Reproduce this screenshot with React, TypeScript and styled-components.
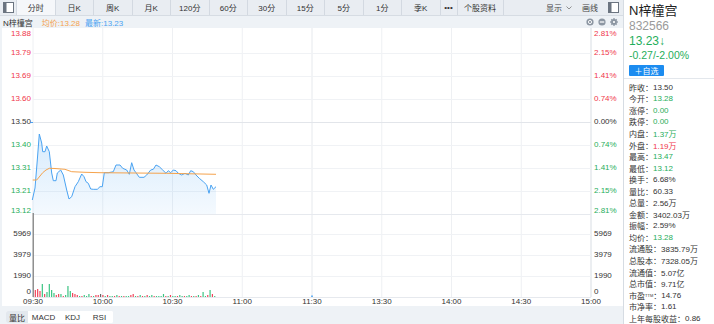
import React from 'react';
import styled, { createGlobalStyle } from 'styled-components';

const GlobalStyle = createGlobalStyle`
  body {
    margin: 0;
    background: #fff;
    font-family: "Liberation Sans", "Noto Sans CJK SC", sans-serif;
    color: #333;
  }
  * { box-sizing: border-box; }
`;

const RED = '#f0364a';
const GREEN = '#1fae5b';
const BLUE = '#4aa3f2';
const ORANGE = '#f5a34d';

const Page = styled.div`
  display: flex;
  width: 714px;
  height: 324px;
  overflow: hidden;
`;

const Main = styled.div`
  width: 623px;
  display: flex;
  flex-direction: column;
`;

const Toolbar = styled.div`
  height: 16px;
  display: flex;
  align-items: stretch;
  background: #e9edf2;
  border-bottom: 1px solid #d6dce3;
  font-size: 8px;
  color: #333;
`;

const IconCell = styled.div`
  width: 17px;
  display: flex;
  align-items: center;
  justify-content: center;
  border-right: 1px solid #d3d9e1;
`;

const Tab = styled.div<{ $active?: boolean; $w: number }>`
  width: ${(p) => p.$w}px;
  display: flex;
  align-items: center;
  justify-content: center;
  border-right: 1px solid #d3d9e1;
  background: ${(p) => (p.$active ? '#f5f7fa' : 'transparent')};
  white-space: nowrap;
`;

const ToolRight = styled.div`
  margin-left: auto;
  display: flex;
  align-items: center;
  gap: 10px;
  padding-right: 4px;
`;

const ToolText = styled.span`
  display: flex;
  align-items: center;
  gap: 4px;
  color: #444;
`;

const Header = styled.div`
  height: 12px;
  display: flex;
  align-items: center;
  padding: 0 3px;
  background: #eef2f6;
  font-size: 8px;
`;

const HeadItem = styled.span<{ $color: string; $gap: number }>`
  color: ${(p) => p.$color};
  margin-left: ${(p) => p.$gap}px;
`;

const HeadIcons = styled.div`
  margin-left: auto;
  display: flex;
  align-items: center;
  gap: 4px;
  padding-right: 2px;
`;

const ChartBox = styled.div`
  height: 278px;
  background: #fff;
`;

const Footer = styled.div`
  height: 18px;
  background: #eef2f6;
  display: flex;
  align-items: flex-end;
  padding: 0 0 1px 6px;
`;

const IndGroup = styled.div`
  display: flex;
  height: 12px;
  background: #fff;
  border-radius: 2px;
  overflow: hidden;
  font-size: 8px;
`;

const IndTab = styled.div<{ $active?: boolean; $w: number }>`
  width: ${(p) => p.$w}px;
  display: flex;
  align-items: center;
  justify-content: center;
  background: ${(p) => (p.$active ? '#e3e8ee' : '#fff')};
  color: #333;
`;

const Side = styled.div`
  width: 91px;
  border-left: 1px solid #d6dce3;
  display: flex;
  flex-direction: column;
  background: #fff;
`;

const Quote = styled.div`
  padding: 2px 0 0 5px;
  height: 80px;
  border-bottom: 1px solid #e3e7ec;
  display: flex;
  flex-direction: column;
`;

const Name = styled.div`
  font-size: 13px;
  line-height: 17px;
  color: #222;
`;

const Code = styled.div`
  font-size: 12px;
  line-height: 15px;
  color: #9a9a9a;
`;

const Last = styled.div`
  font-size: 12px;
  line-height: 14px;
  color: ${GREEN};
`;

const Change = styled.div`
  font-size: 10.5px;
  line-height: 14px;
  color: ${GREEN};
`;

const AddButton = styled.div`
  margin-top: 3px;
  width: 35px;
  height: 11px;
  background: #1c8cf0;
  color: #fff;
  font-size: 8px;
  display: flex;
  align-items: center;
  justify-content: center;
  border-radius: 1px;
`;

const Stats = styled.div`
  padding: 3px 0 0 5px;
  display: flex;
  flex-direction: column;
`;

const Row = styled.div`
  height: 11.55px;
  display: flex;
  align-items: center;
  font-size: 8px;
  white-space: nowrap;
  color: #333;
`;

const Val = styled.span<{ $color?: string }>`
  color: ${(p) => p.$color || '#333'};
`;

const Sup = styled.sup`
  font-size: 4px;
  vertical-align: 4px;
`;

const PanelIcon = () => (
  <svg width="11" height="11" viewBox="0 0 11 11">
    <rect x="0.5" y="0.5" width="10" height="10" fill="#fff" stroke="#6b7480" />
    <rect x="1" y="1" width="2.5" height="9" fill="#6b7480" />
  </svg>
);

const Chevron = () => (
  <svg width="6" height="4" viewBox="0 0 6 4">
    <path d="M0.5 0.5 L3 3 L5.5 0.5" fill="none" stroke="#777" strokeWidth="0.8" />
  </svg>
);

const DotCircle = () => (
  <svg width="8" height="8" viewBox="0 0 8 8">
    <circle cx="4" cy="4" r="3.6" fill="#8c96a2" />
    <circle cx="4" cy="4" r="1.6" fill="none" stroke="#fff" strokeWidth="0.9" />
  </svg>
);

const MinusCircle = () => (
  <svg width="8" height="8" viewBox="0 0 8 8">
    <circle cx="4" cy="4" r="3.6" fill="#8c96a2" />
    <rect x="1.8" y="3.4" width="4.4" height="1.2" fill="#fff" />
  </svg>
);

const Gear = () => (
  <svg width="8" height="8" viewBox="0 0 8 8">
    <g fill="#8c96a2">
      {[0, 45, 90, 135].map((a) => (
        <rect key={a} x="3.2" y="0.2" width="1.6" height="7.6" transform={`rotate(${a} 4 4)`} />
      ))}
      <circle cx="4" cy="4" r="2.7" />
    </g>
    <circle cx="4" cy="4" r="1.1" fill="#fff" />
  </svg>
);

const tabs = ['分时', '日K', '周K', '月K', '120分', '60分', '30分', '15分', '5分', '1分', '季K'];

// chart geometry, in chart-local pixels
const X0 = 33;
const X1 = 591;
const STEP = (X1 - X0) / 8;
const OFF = 28;

const priceGrid = [25, 48, 71, 94, 117, 140, 163];
const leftLabels = [
  { t: '13.88', y: 6, c: RED },
  { t: '13.79', y: 25, c: RED },
  { t: '13.69', y: 48, c: RED },
  { t: '13.60', y: 71, c: RED },
  { t: '13.50', y: 94, c: '#333' },
  { t: '13.40', y: 117, c: GREEN },
  { t: '13.31', y: 140, c: GREEN },
  { t: '13.21', y: 163, c: GREEN },
  { t: '13.12', y: 182.5, c: GREEN },
];
const rightLabels = ['2.81%', '2.15%', '1.41%', '0.74%', '0.00%', '0.74%', '1.41%', '2.15%', '2.81%'];
const volLabels = [
  { t: '5969', y: 206 },
  { t: '3979', y: 227 },
  { t: '1990', y: 248 },
  { t: '0', y: 264 },
];
const times = ['09:30', '10:00', '10:30', '11:00', '11:30', '13:30', '14:00', '14:30', '15:00'];

const priceLine: [number, number][] = [
  [32.3, 200], [35, 188], [37.3, 160], [39.3, 134], [41.7, 143], [42.7, 151.7], [45, 151.7],
  [46.7, 146], [49.3, 151.7], [51.7, 173], [53.3, 180.7], [56, 180.7], [57.3, 173], [60.7, 170],
  [63.3, 175], [66.7, 190], [69, 199], [71.7, 196.7], [75, 186.7], [78.3, 181.7], [81.7, 174],
  [84, 176.7], [86, 181.7], [88.3, 183.3], [90.7, 189], [93.3, 189.3], [97.3, 189.3], [100, 186.7],
  [102.3, 186.7], [104.3, 172.7], [108.3, 172.7], [113.3, 171.7], [116, 165], [120, 165],
  [122.7, 168.3], [126.7, 170], [129.3, 174.3], [131.7, 162.7], [134, 170], [136, 172.7],
  [139.3, 177.3], [144, 177.3], [146.7, 175], [150.7, 170], [153.3, 169.3], [156, 165],
  [159.3, 166.7], [162.7, 170], [166, 173.3], [168.3, 170.7], [170.7, 172.7], [173.3, 170],
  [176, 170.7], [178.3, 173.3], [181.7, 175], [185, 173.3], [188.3, 175], [190.7, 170.7],
  [193.3, 171.7], [196, 175], [199.3, 178.3], [203.3, 181.7], [206.7, 185], [209, 193.3],
  [211, 185], [213.3, 189.3], [216, 186.7],
];

const avgLine: [number, number][] = [
  [32.7, 180], [36.7, 180], [40, 176], [42.7, 172.7], [46, 170], [49.3, 168.3], [55, 168.5],
  [65, 169.3], [71.7, 171.7], [85, 172.3], [100, 172.7], [166.7, 173.3], [216, 174.3],
];

const volumes = 'r7 r8 r6 g13 r3 g5 g13 g7 g4 r2 r3 g3 r1 g2 g11 g6 r4 r3 r2 g1 r1 g2 g1 g3 r1 g1 r2 r2 k3 r2 g1 r2 g1 g1 r1 g2 r1 g1 r1 g1 g1 r2 r3 g1 r1 g2 r1 g1 r2 g1 g2 r1 g1 g1 g1 g3 r1 g1 r2 g1 g1 r1 g2 g1 r1 g1 g2 r1 g1 r1 g2 r1 g5 g1 r2 g7 r3 g1'
  .split(' ')
  .map((s) => ({ c: s[0], h: Number(s.slice(1)) }));

const volColor: Record<string, string> = { r: '#f0455b', g: '#3cc483', k: '#666' };

const pts = (list: [number, number][]) => list.map(([x, y]) => `${x},${y - OFF}`).join(' ');

const IntradayChart = () => {
  const base = 269;
  const fill =
    `M${priceLine[0][0]},186 ` +
    priceLine.map(([x, y]) => `L${x},${y - OFF}`).join(' ') +
    ` L${priceLine[priceLine.length - 1][0]},186 Z`;
  return (
    <svg width="623" height="278" viewBox="0 0 623 278" fontFamily="Liberation Sans, sans-serif" fontSize="8">
      <defs>
        <linearGradient id="area" x1="0" y1="0" x2="0" y2="1">
          <stop offset="0" stopColor="#4aa3f2" stopOpacity="0.22" />
          <stop offset="1" stopColor="#4aa3f2" stopOpacity="0.06" />
        </linearGradient>
      </defs>
      <rect x="0" y="0" width="2" height="278" fill="#eef2f6" />
      {Array.from({ length: 9 }, (_, i) => (
        <line
          key={i}
          x1={X0 + i * STEP}
          x2={X0 + i * STEP}
          y1="0"
          y2={base}
          stroke={i === 8 ? '#d8dde3' : i === 4 ? '#e6e9ed' : '#eef0f3'}
          strokeWidth="1"
        />
      ))}
      {priceGrid.map((y) => (
        <line key={y} x1={X0} x2={X1} y1={y + 0.5} y2={y + 0.5} stroke={y === 94 ? '#e2e5ea' : '#f0f2f5'} />
      ))}
      <line x1={X0} x2={X1} y1="186.5" y2="186.5" stroke="#e6e9ee" />
      {[206, 227, 248].map((y) => (
        <line key={y} x1={X0} x2={X1} y1={y + 0.5} y2={y + 0.5} stroke="#f0f2f5" />
      ))}
      <line x1={X0} x2={X1} y1={base + 0.5} y2={base + 0.5} stroke="#e6e9ee" />
      <line x1="30.5" x2={X0} y1="94.5" y2="94.5" stroke={BLUE} />

      {leftLabels.map((l) => (
        <text key={l.t} x="31" y={l.y} fill={l.c} textAnchor="end" dominantBaseline="middle">
          {l.t}
        </text>
      ))}
      {rightLabels.map((t, i) => (
        <text
          key={i}
          x="594"
          y={leftLabels[i].y}
          fill={i < 4 ? RED : i === 4 ? '#333' : GREEN}
          dominantBaseline="middle"
        >
          {t}
        </text>
      ))}
      {volLabels.map((l) => (
        <React.Fragment key={l.t}>
          <text x="31" y={l.y} fill="#333" textAnchor="end" dominantBaseline="middle">
            {l.t}
          </text>
          <text x="594" y={l.y} fill="#333" dominantBaseline="middle">
            {l.t}
          </text>
        </React.Fragment>
      ))}
      {times.map((t, i) => (
        <text key={t} x={X0 + i * STEP} y="274" fill="#333" textAnchor="middle" dominantBaseline="middle">
          {t}
        </text>
      ))}

      <path d={fill} fill="url(#area)" />
      <polyline points={pts(priceLine)} fill="none" stroke={BLUE} strokeWidth="1" strokeLinejoin="round" />
      <polyline points={pts(avgLine)} fill="none" stroke={ORANGE} strokeWidth="1" strokeLinejoin="round" />

      <rect x="32.6" y="185" width="1.2" height={base - 185} fill="#777" />
      {volumes.map((v, i) => (
        <rect key={i} x={X0 + (i + 1) * 2.33 - 0.6} y={base - v.h} width="1.2" height={v.h} fill={volColor[v.c]} />
      ))}
      <rect x={X0 + 4 * STEP - 0.8} y={base - 1.5} width="1.6" height="1.5" fill={BLUE} />
    </svg>
  );
};

const stats: { k: React.ReactNode; v: string; c?: string }[] = [
  { k: '昨收', v: '13.50' },
  { k: '今开', v: '13.28', c: GREEN },
  { k: '涨停', v: '0.00', c: GREEN },
  { k: '跌停', v: '0.00', c: GREEN },
  { k: '内盘', v: '1.37万', c: GREEN },
  { k: '外盘', v: '1.19万', c: RED },
  { k: '最高', v: '13.47', c: GREEN },
  { k: '最低', v: '13.12', c: GREEN },
  { k: '换手', v: '6.68%' },
  { k: '量比', v: '60.33' },
  { k: '总量', v: '2.56万' },
  { k: '金额', v: '3402.03万' },
  { k: '振幅', v: '2.59%' },
  { k: '均价', v: '13.28', c: GREEN },
  { k: '流通股', v: '3835.79万' },
  { k: '总股本', v: '7328.05万' },
  { k: '流通值', v: '5.07亿' },
  { k: '总市值', v: '9.71亿' },
  { k: <>市盈<Sup>TTM</Sup></>, v: '14.76' },
  { k: '市净率', v: '1.61' },
  { k: '上年每股收益', v: '0.86' },
];

const App = () => (
  <>
    <GlobalStyle />
    <Page>
      <Main>
        <Toolbar>
          <IconCell>
            <PanelIcon />
          </IconCell>
          {tabs.map((t, i) => (
            <Tab key={t} $w={38.5} $active={i === 0}>
              {t}
            </Tab>
          ))}
          <Tab $w={17}>•••</Tab>
          <Tab $w={46}>个股资料</Tab>
          <ToolRight>
            <ToolText>
              显示 <Chevron />
            </ToolText>
            <ToolText>画线</ToolText>
            <PanelIcon />
          </ToolRight>
        </Toolbar>
        <Header>
          <span>N梓橦宫</span>
          <HeadItem $color={ORANGE} $gap={9}>均价:13.28</HeadItem>
          <HeadItem $color={BLUE} $gap={5}>最新:13.23</HeadItem>
          <HeadIcons>
            <DotCircle />
            <MinusCircle />
            <Gear />
          </HeadIcons>
        </Header>
        <ChartBox>
          <IntradayChart />
        </ChartBox>
        <Footer>
          <IndGroup>
            <IndTab $w={22} $active>量比</IndTab>
            <IndTab $w={31}>MACD</IndTab>
            <IndTab $w={27}>KDJ</IndTab>
            <IndTab $w={27}>RSI</IndTab>
          </IndGroup>
        </Footer>
      </Main>
      <Side>
        <Quote>
          <Name>N梓橦宫</Name>
          <Code>832566</Code>
          <Last>13.23↓</Last>
          <Change>-0.27/-2.00%</Change>
          <AddButton>＋自选</AddButton>
        </Quote>
        <Stats>
          {stats.map((s, i) => (
            <Row key={i}>
              {s.k}：<Val $color={s.c}>{s.v}</Val>
            </Row>
          ))}
        </Stats>
      </Side>
    </Page>
  </>
);

export default App;
